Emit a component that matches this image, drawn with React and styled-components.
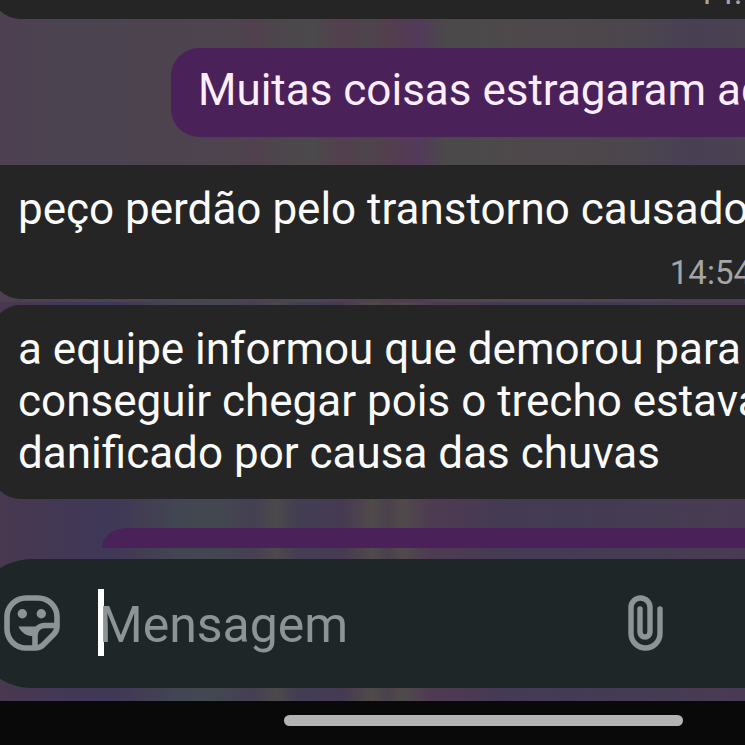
import React from "react";
import styled, { createGlobalStyle } from 'styled-components'


function StickerIcon() {
    return (
        <svg width="56" height="56" viewBox="0 0 56 56" fill="none" stroke="currentColor" strokeWidth="5.6" aria-hidden="true">
            <path d="M53 31V22A19 19 0 0 0 34 3H22A19 19 0 0 0 3 22V34A19 19 0 0 0 22 53H31C35 53 37 52 39 50L50 39C52 37 53 35 53 31Z" />
            <path d="M31 53V40A9.5 9.5 0 0 1 40.500 30.500H53" />
            <circle cx="18.300" cy="18.700" r="4.700" fill="currentColor" stroke="none" />
            <circle cx="37.300" cy="18.700" r="4.700" fill="currentColor" stroke="none" />
            <path d="M14.500 31.500H37L31 41C24 42 17 38 14.500 31.500Z" fill="currentColor" stroke="none" />
        </svg>
    )
}

function ClipIcon() {
    return (
        <svg width="35" height="56" viewBox="0 0 35 56" fill="none" stroke="currentColor" strokeWidth="5.4" strokeLinecap="round" aria-hidden="true">
            <path d="M32 14V38.500A14.500 14.500 0 0 1 3 38.500V12.500A9.500 9.500 0 0 1 22 12.500V37A5 5 0 0 1 12 37V14" />
        </svg>
    )
}

function App() {
    return (
        <Screen>
            <GlobalStyle />
            <Chat>
                <Received $gap={29}>
                    <Time $inset={6}>14:54</Time>
                </Received>
                <Sent $gap={28}>
                    <Text>Muitas coisas estragaram aqui</Text>
                </Sent>
                <Received $gap={6} $first>
                    <Text>peço perdão pelo transtorno causado</Text>
                    <Time $inset={33}>14:54</Time>
                </Received>
                <Received $gap={29} $last>
                    <Text>
                        a equipe informou que demorou para<br />
                        conseguir chegar pois o trecho estava<br />
                        danificado por causa das chuvas
                    </Text>
                </Received>
                <NextSent />
            </Chat>
            <Composer>
                <IconButton type="button" aria-label="Figurinhas">
                    <StickerIcon />
                </IconButton>
                <Field>
                    <Caret />
                    <Input type="text" placeholder="Mensagem" aria-label="Mensagem" />
                </Field>
                <IconButton type="button" aria-label="Anexar">
                    <ClipIcon />
                </IconButton>
            </Composer>
            <NavBar>
                <HomeHandle />
            </NavBar>
        </Screen>
    )
}

export default App;

const GlobalStyle = createGlobalStyle`
* {
    box-sizing: border-box;
}
body {
    margin: 0;
    background-color: #090909;
    font-family: Roboto, sans-serif;
}
`

const Screen = styled.div`
display: flex;
flex-direction: column;
height: 100vh;
overflow: hidden;
background-image:
    linear-gradient(to right,
        #4e4051 0%, #4b4350 8%, #4a444f 13%, #4d434f 20%, #4d444e 32%, #523f4e 34%,
        #4c464c 37%, #4b494b 42%, #543e4e 46%, #4d454b 49%, #523f4d 52%,
        #52395a 56%, #4b494a 60%, #4b4a4b 64%, #4f484b 70%, #4d474b 80%,
        #4a4450 88%, #483f53 93%, #4a4250 100%),
    linear-gradient(to right,
        #483850 0%, #433855 8%, #3f3857 14%, #423b54 18%, #424652 24%,
        #42484f 29%, #453f53 34%, #4c494b 37%, #423e52 40%, #463a53 46%,
        #504a4a 50%, #4a414c 52%, #504a4b 54%, #4e3b52 58%, #463a53 66%,
        #433b54 76%, #463c52 90%, #493a53 100%);
background-size: 100% 302px, 100% calc(100% - 302px);
background-position: top, bottom;
background-repeat: no-repeat;
`

const Chat = styled.main`
flex: 1;
min-height: 0;
display: flex;
flex-direction: column;
justify-content: flex-end;
overflow: hidden;
margin-bottom: 11px;
`

const Bubble = styled.article`
flex: none;
margin-bottom: ${props => props.$gap}px;
white-space: nowrap;
`

const Received = styled(Bubble)`
margin-left: -8px;
margin-right: -40px;
padding: 18px 0 ${props => props.$last ? 20 : 7}px 26px;
border-radius: ${props => props.$first ? 0 : 28}px 28px 28px 28px;
background-color: #242524;
color: #fafafa;
`

const Sent = styled(Bubble)`
margin-left: 171px;
padding: 16px 0 21px 27px;
border-radius: 28px 0 0 28px;
background-color: #4a2159;
color: #fdeeff;
`

const NextSent = styled.div`
flex: none;
height: 20px;
margin-left: 102px;
border-top-left-radius: 28px 22px;
background-color: #4a2159;
`

const Text = styled.p`
margin: 0;
font-size: 44px;
line-height: 52px;
`

const Time = styled.time`
display: block;
margin-top: 19px;
padding-right: ${props => props.$inset}px;
font-size: 33px;
line-height: 38px;
text-align: right;
color: #a5a5a5;
`

const Composer = styled.form`
flex: none;
display: flex;
align-items: center;
height: 129px;
margin-left: -31px;
margin-bottom: 13px;
padding: 0 82px 2px 35px;
border-radius: 64px 0 0 64px;
background-color: #1f2628;
`

const IconButton = styled.button`
flex: none;
display: flex;
padding: 0;
border: 0;
background: none;
color: #8c9495;
`

const Field = styled.div`
position: relative;
flex: 1;
min-width: 0;
display: flex;
align-items: center;
height: 67px;
margin-left: 38px;
`

const Caret = styled.span`
position: absolute;
left: 0;
top: 0;
bottom: 0;
width: 6px;
background-color: #fff;
`

const Input = styled.input`
position: relative;
width: 100%;
padding: 4px 0 0 1px;
border: 0;
outline: none;
background: none;
color: #fafafa;
font-family: inherit;
font-size: 50px;
line-height: 60px;
&::placeholder {
    color: #8c9495;
    opacity: 1;
}
`

const NavBar = styled.footer`
flex: none;
display: flex;
justify-content: center;
height: 44px;
padding: 14px 62px 0 284px;
background-color: #090909;
`

const HomeHandle = styled.div`
width: 100%;
height: 11px;
border-radius: 6px;
background-color: #b4b4b4;
`
